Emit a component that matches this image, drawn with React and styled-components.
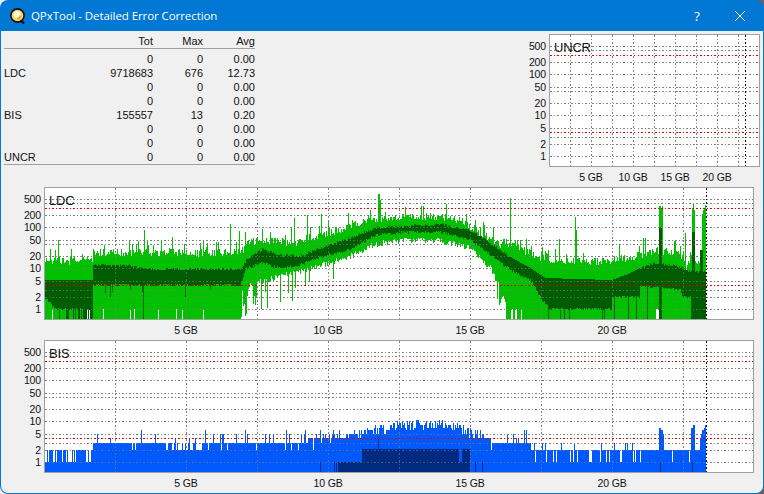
import React from 'react';
import styled, { createGlobalStyle } from 'styled-components';

const rows = [
  ['', '0', '0', '0.00'],
  ['LDC', '9718683', '676', '12.73'],
  ['', '0', '0', '0.00'],
  ['', '0', '0', '0.00'],
  ['BIS', '155557', '13', '0.20'],
  ['', '0', '0', '0.00'],
  ['', '0', '0', '0.00'],
  ['UNCR', '0', '0', '0.00'],
];

const ticks = [1, 2, 5, 10, 20, 50, 100, 200, 500];
const gridValues = [1, 2, 3, 5, 10, 20, 40, 50, 100, 200, 400, 500];
const valueY = (v) => 122.3 - 41 * Math.log10(v);

const rng = (seed) => () => {
  seed = (seed + 0x6d2b79f5) | 0;
  let t = Math.imul(seed ^ (seed >>> 15), 1 | seed);
  t = (t + Math.imul(t ^ (t >>> 7), 61 | t)) ^ t;
  return ((t ^ (t >>> 14)) >>> 0) / 4294967296;
};

const lerp = (table, x) => {
  for (let i = 1; i < table.length; i++) {
    if (x <= table[i][0]) {
      const [x0, y0] = table[i - 1];
      const [x1, y1] = table[i];
      return y0 + ((y1 - y0) * (x - x0)) / (x1 - x0);
    }
  }
  return table[table.length - 1][1];
};

const LDC_TOP = [[44, 262], [92, 260], [93, 253], [240, 253], [248, 243], [262, 241], [300, 243], [320, 236], [350, 227], [375, 219], [410, 217], [440, 217], [460, 221], [475, 230], [500, 245], [504, 243], [520, 250], [545, 260], [600, 262], [630, 258], [650, 252], [680, 253], [686, 268], [690, 262], [706, 262]];
const LDC_LOW = [[44, 319], [240, 319], [244, 300], [250, 282], [280, 273], [320, 263], [350, 253], [375, 241], [410, 237], [440, 238], [470, 245], [490, 265], [500, 285], [504, 298], [506, 319], [706, 319]];
const DARK_TOP = [[44, 280], [92, 280], [93, 265], [130, 266], [150, 269], [240, 269], [246, 260], [262, 249], [280, 255], [300, 256], [320, 248], [350, 238], [375, 228], [410, 226], [440, 224], [470, 230], [490, 243], [510, 257], [530, 268], [545, 278], [611, 280], [625, 275], [640, 268], [655, 263], [680, 267], [690, 272], [706, 272]];
const DARK_BOT = [[44, 297], [55, 309], [92, 309], [93, 285], [240, 285], [246, 268], [262, 263], [280, 268], [300, 265], [320, 257], [350, 250], [375, 235], [410, 232], [440, 232], [470, 240], [490, 255], [510, 270], [530, 280], [540, 297], [549, 309], [611, 309], [612, 297], [639, 297], [640, 285], [680, 290], [682, 297], [690, 297], [691, 319], [706, 319]];
const LDC_SPIKES = { 58: 240, 144: 230, 169: 248, 200: 243, 203: 240, 216: 242, 230: 224, 239: 231, 294: 218, 307: 215, 321: 214, 378: 194, 379: 194, 380: 200, 483: 222, 484: 225, 510: 198, 526: 239, 559: 239, 575: 217, 576: 230, 619: 244, 645: 238, 659: 206, 660: 206, 661: 208, 662: 206, 685: 233, 692: 208, 693: 204, 694: 210, 702: 214, 703: 210, 704: 208, 705: 205 };

const buildLdc = () => {
  const r = rng(11);
  let light = '';
  let dark = '';
  for (let x = 45; x < 706; x++) {
    const px = x - 18;
    let hi = lerp(LDC_TOP, x) + (r() - 0.55) * 8;
    if (r() < 0.12) hi -= 3 + r() * 10;
    if (LDC_SPIKES[x]) hi = LDC_SPIKES[x];
    let lo = lerp(LDC_LOW, x);
    if (lo < 319) {
      lo += r() * 6;
      if (x < 300 && r() < 0.12) lo = 290 + r() * 19;
      else if (x > 490 && r() < 0.35) lo = 298 + r() * 11;
      else if (x < 350 && r() < 0.08) lo += 15;
    } else if (x < 240 ? r() < (x > 80 && x < 93 ? 0.45 : 0.05) : x < 522 ? r() < 0.3 : x > 655 && x < 660) {
      lo = 309;
    }
    light += `M${px + 0.5} ${hi - 187}V${lo - 187}`;

    let dt = lerp(DARK_TOP, x) + (r() - 0.5) * 3;
    let db = lerp(DARK_BOT, x) + (r() - 0.5) * 3;
    if (x < 93 || (x > 512 && x < 640)) dt = Math.round(lerp(DARK_TOP, x));
    if (db > 296 && r() < 0.1) db = 319;
    if (x > 80 && x < 93 && r() < 0.5) db = 319;
    if (x > 93 && x < 240 && r() < 0.05) db = 290 + r() * 8;
    if (x >= 659 && x <= 661) { dt = 228; db = 319; }
    if (x >= 692 && x <= 694) { dt = 232; db = 319; }
    if (x >= 700 && x <= 702) { dt = 250; db = 319; }
    if (x === 143 || x === 647) { db = 319; }
    dark += `M${px + 0.5} ${dt - 187}V${db - 187}`;
  }
  return { light, dark };
};

const BIS_TOP = [[44, 449], [92, 449], [93, 442], [170, 442], [172, 449], [200, 449], [201, 442], [243, 440], [300, 441], [330, 437], [370, 432], [400, 425], [440, 424], [460, 428], [480, 435], [495, 442], [530, 442], [531, 449], [658, 449], [659, 427], [663, 433], [664, 449], [690, 449], [691, 428], [694, 425], [695, 449], [701, 434], [705, 425], [706, 425]];

const buildBis = () => {
  const r = rng(29);
  let light = '';
  let dark = '';
  const base = 462.3;
  for (let x = 45; x < 706; x++) {
    const px = x - 18;
    let y = lerp(BIS_TOP, x);
    if (x > 320 && x < 490) y += (r() - 0.5) * 10;
    else if (x > 92 && x < 530 && r() < 0.12) y -= 5 + r() * 6;
    else if (x > 171 && x < 201 && r() < 0.1) y = 442;
    else if (x >= 531 && x < 658 && r() < 0.1) y = 442;
    else if (x >= 93 && x < 530 && r() < 0.1) y = 449;
    const v = Math.max(1, Math.round(Math.pow(10, (base - y) / 41)));
    let top = base - 41 * Math.log10(v);
    if (x < 92 && r() < 0.3) top = base;
    if (x >= 531 && x < 690 && r() < 0.15) top = base;
    if (x >= 695 && x < 700) top = base - 12;
    light += `M${px + 0.5} ${top - 340}V132`;

    if (x >= 363 && x <= 458 || x === 362 || (x >= 462 && x <= 469)) {
      dark += `M${px + 0.5} ${449 - 340}V132`;
    } else if ((x >= 338 && x <= 468) || x === 320 || x === 334 || x === 336 || x === 475 || x === 482 || x === 660 || x === 692) {
      dark += `M${px + 0.5} ${462 - 340}V132`;
    }
    if (x === 378) dark += `M${px + 0.5} ${437 - 340}V${449 - 340}`;
  }
  return { light, dark };
};

const ldcData = buildLdc();
const bisData = buildBis();

const DOTS = '1.5 2';

const GridLines = ({ width, height, columns, gbPx, opacity }) => (
  <g opacity={opacity}>
    {gridValues.map((v) => (
      <line key={v} x1="1" x2={width} y1={Math.round(valueY(v)) + 0.5} y2={Math.round(valueY(v)) + 0.5} stroke="#808080" strokeDasharray={DOTS} />
    ))}
    {columns.map((i) => (
      <line key={i} x1={Math.round(i * gbPx * 2.5) + 0.5} x2={Math.round(i * gbPx * 2.5) + 0.5} y1="1" y2={height} stroke="#808080" strokeDasharray={DOTS} />
    ))}
  </g>
);

const Chart = ({ title, left, width, gbPx, endX, data, lightColor, darkColor }) => {
  const plotBottom = 132;
  const columns = [];
  for (let i = 1; i * gbPx * 2.5 < width; i++) columns.push(i);
  return (
    <ChartSvg width={left + width + 1} height={153}>
      <g transform={`translate(${left} 0)`} shapeRendering="crispEdges" fill="none">
        <rect x="0.5" y="0.5" width={width} height={plotBottom} fill="#fff" />
        <GridLines width={width} height={plotBottom} columns={columns} gbPx={gbPx} />
      </g>
      {data && <path d={data.light} stroke={lightColor} shapeRendering="crispEdges" fill="none" />}
      {data && <path d={data.dark} stroke={darkColor} shapeRendering="crispEdges" fill="none" />}
      <g transform={`translate(${left} 0)`} shapeRendering="crispEdges" fill="none">
        {data && <GridLines width={width} height={plotBottom} columns={columns} gbPx={gbPx} opacity={0.6} />}
        {[300, 4].map((v) => (
          <line key={v} x1="1" x2={width} y1={Math.round(valueY(v)) + 0.5} y2={Math.round(valueY(v)) + 0.5} stroke="#e00000" strokeDasharray={DOTS} />
        ))}
        <line x1={endX + 0.5} x2={endX + 0.5} y1="1" y2={plotBottom} stroke="#000" strokeDasharray={DOTS} />
        <rect x="0.5" y="0.5" width={width} height={plotBottom} stroke="#a0a0a0" />
      </g>
      {ticks.map((v) => (
        <AxisText key={v} x={left - 3} y={valueY(v) + 4} textAnchor="end">{v}</AxisText>
      ))}
      {[5, 10, 15, 20].map((gb) => (
        <AxisText key={gb} x={left + gb * gbPx} y={147} textAnchor="middle">{gb} GB</AxisText>
      ))}
      <ChartTitle x={left + 5} y={18}>{title}</ChartTitle>
    </ChartSvg>
  );
};

function App() {
  return (
    <Desktop>
      <GlobalStyle />
      <Win>
        <TitleBar>
          <AppIcon viewBox="0 0 16 16">
            <path d="M11 12.5l3 3" stroke="#111" strokeWidth="2.4" />
            <circle cx="7.5" cy="7.5" r="6.6" fill="#f6d76a" stroke="#111" strokeWidth="1.6" />
            <circle cx="7" cy="6.5" r="3.4" fill="#fff6dc" />
            <path d="M7 10.5a3.5 3.5 0 0 0 3.6-3" stroke="#d89a20" strokeWidth="1.4" fill="none" />
          </AppIcon>
          <TitleText>QPxTool - Detailed Error Correction</TitleText>
          <HelpMark>?</HelpMark>
          <CloseIcon viewBox="0 0 10 10">
            <path d="M0 0L10 10M10 0L0 10" stroke="#fff" strokeWidth="1" fill="none" />
          </CloseIcon>
        </TitleBar>
        <Body>
          <TopRow>
            <Stats>
              <HeadRow>
                <Label />
                <TotCell>Tot</TotCell>
                <MaxCell>Max</MaxCell>
                <AvgCell>Avg</AvgCell>
              </HeadRow>
              <StatRows>
                {rows.map((row, i) => (
                  <StatRow key={i}>
                    <Label>{row[0]}</Label>
                    <TotCell>{row[1]}</TotCell>
                    <MaxCell>{row[2]}</MaxCell>
                    <AvgCell>{row[3]}</AvgCell>
                  </StatRow>
                ))}
              </StatRows>
            </Stats>
            <Chart title="UNCR" left={31} width={210} gbPx={8.4} endX={196} />
          </TopRow>
          <WideCharts>
            <Chart title="LDC" left={26} width={709} gbPx={28.4} endX={662} data={ldcData} lightColor="#00c000" darkColor="#005c00" />
            <Chart title="BIS" left={26} width={709} gbPx={28.4} endX={662} data={bisData} lightColor="#0058ff" darkColor="#002a80" />
          </WideCharts>
        </Body>
      </Win>
    </Desktop>
  );
}

const GlobalStyle = createGlobalStyle`
  html, body {
    margin: 0;
    padding: 0;
  }
  body {
    font-family: "Liberation Sans", Arial, sans-serif;
  }
`;

const Desktop = styled.div`
  width: 764px;
  height: 494px;
  overflow: hidden;
  background: linear-gradient(90deg, #eeeeee 50%, #7a5a58 50%);
`;

const Win = styled.div`
  width: 764px;
  height: 494px;
  box-sizing: border-box;
  display: flex;
  flex-direction: column;
  background: #0078d4;
  border-radius: 8px;
  padding: 0 1px 1px 1px;
`;

const TitleBar = styled.div`
  height: 31px;
  flex: none;
  display: flex;
  align-items: center;
  padding-left: 9px;
  color: #fff;
`;

const AppIcon = styled.svg`
  width: 16px;
  height: 16px;
  margin-right: 5px;
`;

const TitleText = styled.div`
  font-family: "Open Sans", sans-serif;
  font-size: 11.5px;
  letter-spacing: -0.08px;
  flex: 1;
`;

const HelpMark = styled.div`
  font-family: "Open Sans", sans-serif;
  font-size: 13px;
  width: 46px;
  text-align: center;
  margin-right: 15px;
`;

const CloseIcon = styled.svg`
  width: 10px;
  height: 10px;
  margin-right: 18px;
`;

const Body = styled.div`
  flex: 1;
  display: flex;
  flex-direction: column;
  background: #f0f0f0;
  padding-top: 3px;
  border-radius: 0 0 7px 7px;
`;

const TopRow = styled.div`
  height: 153px;
  display: flex;
  justify-content: space-between;
  padding-right: 3px;
`;

const Stats = styled.div`
  width: 251px;
  margin-left: 3px;
  height: 131px;
  color: #111;
  font-size: 11px;
`;

const HeadRow = styled.div`
  height: 14px;
  display: flex;
  align-items: center;
  border-bottom: 1px solid #a0a0a0;
`;

const StatRows = styled.div`
  padding-top: 3px;
  border-bottom: 1px solid #a0a0a0;
`;

const StatRow = styled.div`
  height: 14px;
  display: flex;
  align-items: center;
`;

const Label = styled.div`
  width: 60px;
`;

const TotCell = styled.div`
  width: 89px;
  text-align: right;
`;

const MaxCell = styled.div`
  width: 50px;
  text-align: right;
`;

const AvgCell = styled.div`
  width: 52px;
  text-align: right;
`;

const WideCharts = styled.div`
  display: flex;
  flex-direction: column;
  padding-left: 17px;
`;

const ChartSvg = styled.svg`
  display: block;
  flex: none;
`;

const AxisText = styled.text`
  font-family: "Liberation Sans", Arial, sans-serif;
  font-size: 10.5px;
  letter-spacing: -0.15px;
  fill: #111;
`;

const ChartTitle = styled.text`
  font-family: "Liberation Sans", Arial, sans-serif;
  font-size: 13px;
  letter-spacing: -0.2px;
  fill: #111;
`;

export default App;
